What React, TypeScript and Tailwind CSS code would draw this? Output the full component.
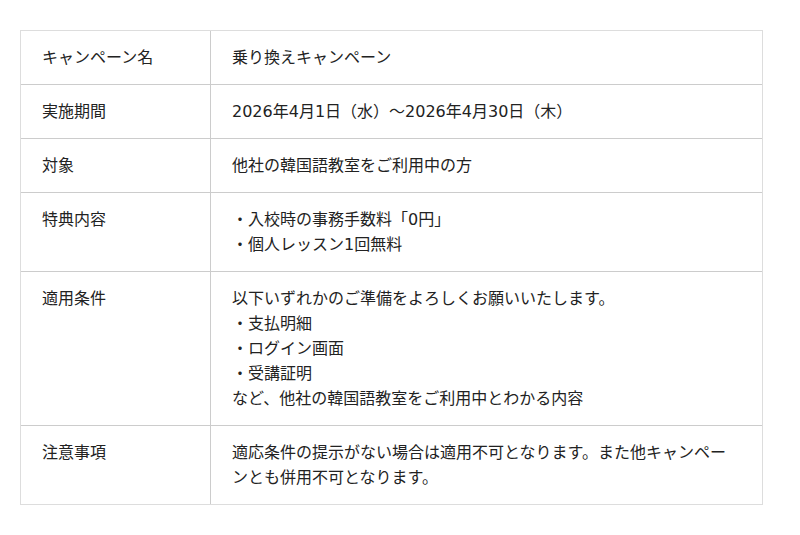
import React from "react";

const rows: { label: string; lines: string[] }[] = [
  { label: "キャンペーン名", lines: ["乗り換えキャンペーン"] },
  { label: "実施期間", lines: ["2026年4月1日（水）〜2026年4月30日（木）"] },
  { label: "対象", lines: ["他社の韓国語教室をご利用中の方"] },
  { label: "特典内容", lines: ["・入校時の事務手数料「0円」", "・個人レッスン1回無料"] },
  {
    label: "適用条件",
    lines: [
      "以下いずれかのご準備をよろしくお願いいたします。",
      "・支払明細",
      "・ログイン画面",
      "・受講証明",
      "など、他社の韓国語教室をご利用中とわかる内容",
    ],
  },
  {
    label: "注意事項",
    lines: ["適応条件の提示がない場合は適用不可となります。また他キャンペーンとも併用不可となります。"],
  },
];

export default function App() {
  return (
    <div
      className="w-[800px] h-[535px] bg-white pt-[30px] pl-[20px] text-[16px] leading-[25px] text-[#222]"
      style={{ fontFamily: '"DejaVu Sans", "Noto Sans CJK JP", sans-serif' }}
    >
      <div className="w-[743px] border border-[#dddddd]">
        {rows.map((r, i) => (
          <div key={i} className={`flex ${i > 0 ? "border-t border-[#cccccc]" : ""}`}>
            <div className="w-[190px] shrink-0 border-r border-[#cccccc] py-[14px] pl-[21px] pr-[10px]">
              {r.label}
            </div>
            <div className="flex-1 py-[14px] pl-[21px] pr-[21px]">
              {r.lines.map((l, j) => (
                <div key={j}>{l}</div>
              ))}
            </div>
          </div>
        ))}
      </div>
    </div>
  );
}
